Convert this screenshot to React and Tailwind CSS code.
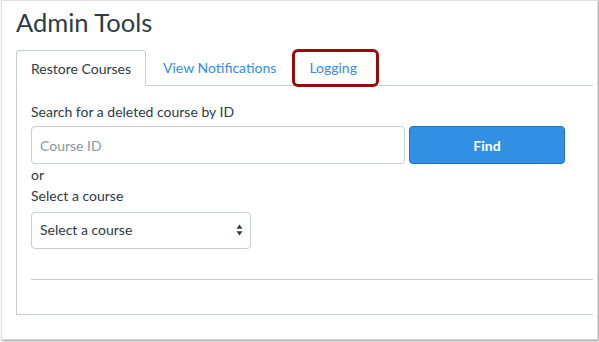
import React from 'react';

const font = { fontFamily: 'Lato, "Open Sans", Arial, sans-serif' };

const SelectArrows = () => (
  <svg width="7" height="12" viewBox="0 0 7 12" className="shrink-0">
    <path d="M3.5 0.5 L6.5 4.8 L0.5 4.8 Z" fill="#2d3b45" />
    <path d="M3.5 11.5 L6.5 7.2 L0.5 7.2 Z" fill="#2d3b45" />
  </svg>
);

export default function App() {
  return (
    <div className="w-[599px] h-[342px] bg-white" style={font}>
      <div className="ml-[1px] w-[597px] h-[340px] bg-white border border-[#dcdcdc] shadow-[1px_1px_2px_rgba(0,0,0,0.45)] pl-[14px] pr-[4px] pt-[5px] text-[#2d3b45]">
        <h1 className="text-[25.5px] leading-[33px] font-normal">Admin Tools</h1>

        {/* Tabs */}
        <div className="mt-[11px] flex items-end border-b border-[#c7cdd1] text-[14px]">
          <div className="h-[36px] -mb-px px-[14px] flex items-center bg-white border border-[#c7cdd1] border-b-white rounded-t-[4px]">
            Restore Courses
          </div>
          <div className="h-[35px] ml-[3px] px-[14px] flex items-center text-[#338de6]">View Notifications</div>
          <div className="relative h-[35px] ml-[5px] px-[14px] flex items-center text-[#338de6]">
            Logging
            <span className="absolute left-[-3px] top-[-1px] w-[87px] h-[38px] border-[3px] border-[#960c0c] rounded-[6px]" />
          </div>
        </div>

        {/* Panel */}
        <div className="border-l border-b border-[#c7cdd1] pl-[14px] pt-[16px] pb-[34px] text-[14px]">
          <div className="leading-[20px]">Search for a deleted course by ID</div>
          <div className="mt-[4px] flex">
            <div className="w-[374px] h-[38px] border border-[#c7cdd1] rounded-[4px] pl-[8px] flex items-center text-[#8b969e]">
              Course ID
            </div>
            <div className="ml-[4px] w-[156px] h-[38px] rounded-[4px] bg-[#3290e4] border border-[#1f70bd] flex items-center justify-center text-white font-bold">
              Find
            </div>
          </div>
          <div className="leading-[21px]">or</div>
          <div className="leading-[21px]">Select a course</div>
          <div className="mt-[6px] w-[220px] h-[37px] border border-[#c7cdd1] rounded-[4px] pl-[8px] pr-[7px] pb-[2px] flex items-center justify-between">
            <span>Select a course</span>
            <SelectArrows />
          </div>
          <div className="mt-[30px] border-t border-[#c7cdd1]" />
        </div>
      </div>
    </div>
  );
}
